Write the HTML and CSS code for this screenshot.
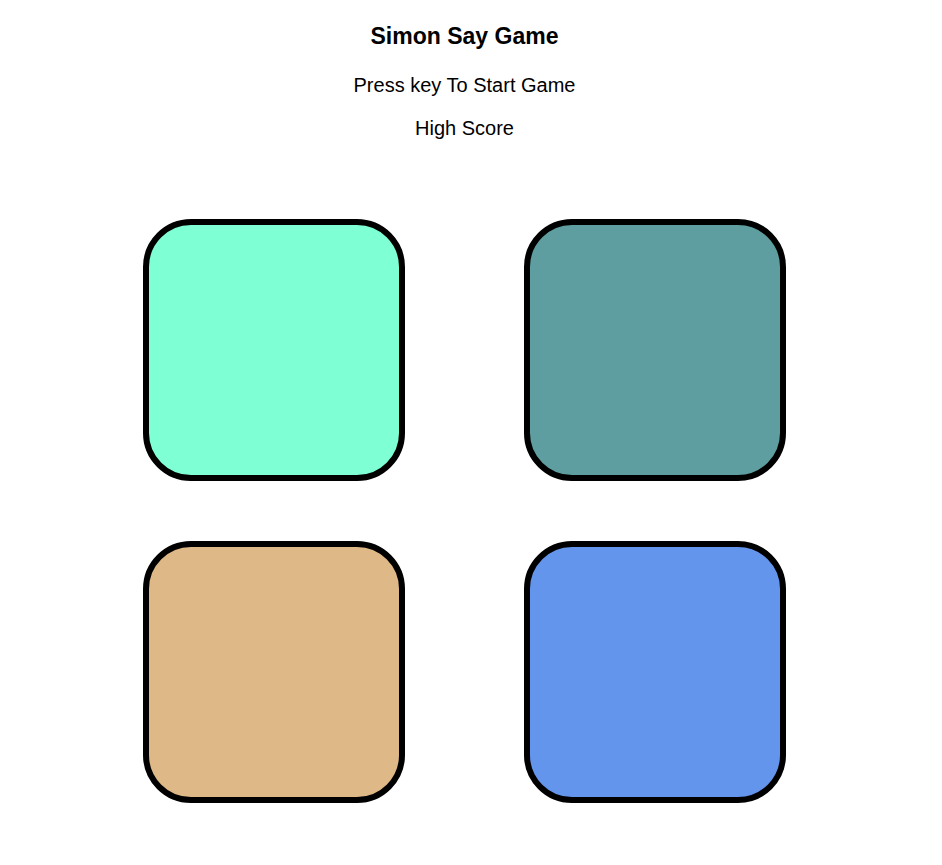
FILE: index.html
```html
<!DOCTYPE html>
<html>
<head>
<meta charset="utf-8">
<title>Simon Say Game</title>
<link rel="stylesheet" href="styles.css">
</head>
<body>
<div class="page">
  <h2 class="title">Simon Say Game</h2>
  <h3 class="status">Press key To Start Game</h3>
  <h3 class="score">High Score</h3>
  <div class="board">
    <div class="btn green"></div>
    <div class="btn teal"></div>
    <div class="btn tan"></div>
    <div class="btn blue"></div>
  </div>
</div>
</body>
</html>
```
FILE: styles.css
```css
body {
  margin: 0;
  font-family: "Liberation Sans", Arial, sans-serif;
  color: #000;
  background: #fff;
}
.page {
  width: 929px;
  text-align: center;
}
.title {
  margin: 23px 0 0;
  font-size: 23px;
  font-weight: bold;
}
.status {
  margin: 24px 0 0;
  font-size: 20px;
  font-weight: normal;
}
.score {
  margin: 20px 0 0;
  font-size: 20px;
  font-weight: normal;
}
.board {
  display: grid;
  grid-template-columns: 262px 262px;
  grid-auto-rows: 262px;
  column-gap: 119px;
  row-gap: 60px;
  justify-content: center;
  margin-top: 79px;
}
.btn {
  border: 6px solid #000;
  border-radius: 48px;
}
.green { background: aquamarine; }
.teal { background: cadetblue; }
.tan { background: burlywood; }
.blue { background: cornflowerblue; }
```
